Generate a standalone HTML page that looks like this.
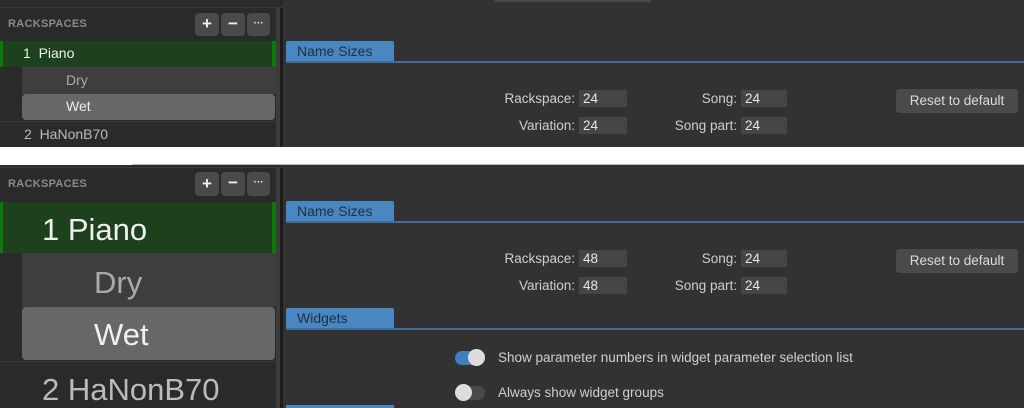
<!DOCTYPE html>
<html><head><style>
*{margin:0;padding:0;box-sizing:border-box}
body{width:1024px;height:408px;background:#fff;font-family:"Liberation Sans",sans-serif;position:relative;overflow:hidden}
.a{position:absolute}
.side{background:#2a2a2a}
.main{background:#323232}
.hdr{color:#8a8a8a;font-weight:bold;font-size:11px;letter-spacing:.3px}
.btn{background:#4a4a4a;border-radius:4px;color:#eee;font-weight:bold;text-align:center}
.tab{background:#4a86c0;color:#1e2f44;font-size:14px;padding-left:11px;border-radius:2px 2px 0 0}
.line{height:2px;background:#3d6e9e}
.lbl{color:#cfcfcf;font-size:13.5px;text-align:right;white-space:nowrap}
.inp{background:#454545;color:#e6e6e6;font-size:13.5px;padding-left:4px;line-height:17px}
.rst{background:#4a4a4a;color:#ddd;font-size:13.5px;border-radius:3px;text-align:center}
</style></head><body>
<!-- TOP -->
<div class="a main" style="left:283px;top:0;width:741px;height:147px"></div>
<div class="a side" style="left:0;top:0;width:283px;height:147px"></div>
<div class="a" style="left:0;top:7px;width:283px;height:1px;background:#3a3a3a"></div>
<div class="a" style="left:276px;top:8px;width:4px;height:139px;background:#3c3c3c"></div>
<div class="a" style="left:280px;top:8px;width:3px;height:139px;background:#1c1c1c"></div>
<div class="a hdr" style="left:8px;top:18px">RACKSPACES</div>
<div class="a btn" style="left:195px;top:13px;width:24px;height:23px;font-size:17px;line-height:22px">+</div>
<div class="a btn" style="left:221px;top:13px;width:24px;height:23px;font-size:17px;line-height:21px">−</div>
<div class="a btn" style="left:247px;top:13px;width:23px;height:23px;font-size:10px;line-height:21px">···</div>
<div class="a" style="left:0;top:41px;width:276px;height:26px;background:#1d401d;border-left:3px solid #0b7a0b;border-right:4px solid #0b7a0b"></div>
<div class="a" style="left:23px;top:45px;color:#f0f0f0;font-size:14px">1 &nbsp;Piano</div>
<div class="a" style="left:22px;top:67px;width:254px;height:27px;background:#3e3e3e"></div>
<div class="a" style="left:66px;top:72px;color:#aaa;font-size:14px">Dry</div>
<div class="a" style="left:22px;top:94px;width:253px;height:26px;background:#676767;border-radius:4px"></div>
<div class="a" style="left:66px;top:98px;color:#f0f0f0;font-size:14px">Wet</div>
<div class="a" style="left:0;top:121px;width:276px;height:1px;background:#3a3a3a"></div>
<div class="a" style="left:24px;top:126px;color:#bbb;font-size:14px">2 &nbsp;HaNonB70</div>
<div class="a" style="left:495px;top:0;width:156px;height:2px;background:#4a4a4a"></div>
<div class="a tab" style="left:286px;top:41px;width:108px;height:21px;line-height:21px">Name Sizes</div>
<div class="a line" style="left:286px;top:61px;width:738px"></div>
<div class="a lbl" style="left:440px;top:91px;width:135px">Rackspace:</div>
<div class="a inp" style="left:579px;top:90px;width:48px;height:17px">24</div>
<div class="a lbl" style="left:440px;top:118px;width:135px">Variation:</div>
<div class="a inp" style="left:579px;top:117px;width:48px;height:17px">24</div>
<div class="a lbl" style="left:600px;top:91px;width:137px">Song:</div>
<div class="a inp" style="left:741px;top:90px;width:46px;height:17px">24</div>
<div class="a lbl" style="left:600px;top:118px;width:137px">Song part:</div>
<div class="a inp" style="left:741px;top:117px;width:46px;height:17px">24</div>
<div class="a rst" style="left:896px;top:89px;width:122px;height:24px;line-height:24px">Reset to default</div>
<!-- BOTTOM -->
<div class="a main" style="left:283px;top:165px;width:741px;height:243px"></div>
<div class="a side" style="left:0;top:165px;width:283px;height:243px"></div>
<div class="a" style="left:132px;top:164px;width:892px;height:1px;background:#bbb"></div>
<div class="a" style="left:0;top:167px;width:283px;height:1px;background:#3a3a3a"></div>
<div class="a" style="left:276px;top:168px;width:4px;height:240px;background:#3c3c3c"></div>
<div class="a" style="left:280px;top:168px;width:3px;height:240px;background:#1c1c1c"></div>
<div class="a hdr" style="left:8px;top:178px">RACKSPACES</div>
<div class="a btn" style="left:195px;top:172px;width:24px;height:24px;font-size:17px;line-height:23px">+</div>
<div class="a btn" style="left:221px;top:172px;width:24px;height:24px;font-size:17px;line-height:22px">−</div>
<div class="a btn" style="left:247px;top:172px;width:23px;height:24px;font-size:10px;line-height:22px">···</div>
<div class="a" style="left:0;top:202px;width:276px;height:51px;background:#1d401d;border-left:3px solid #0b7a0b;border-right:4px solid #0b7a0b"></div>
<div class="a" style="left:42px;top:212px;color:#f0f0f0;font-size:31px">1 Piano</div>
<div class="a" style="left:22px;top:253px;width:254px;height:54px;background:#3e3e3e"></div>
<div class="a" style="left:94px;top:265px;color:#aaa;font-size:31px">Dry</div>
<div class="a" style="left:22px;top:307px;width:253px;height:53px;background:#676767;border-radius:4px"></div>
<div class="a" style="left:94px;top:317px;color:#f0f0f0;font-size:31px">Wet</div>
<div class="a" style="left:0;top:361px;width:276px;height:1px;background:#3a3a3a"></div>
<div class="a" style="left:42px;top:372px;color:#bbb;font-size:31px">2 HaNonB70</div>
<div class="a tab" style="left:286px;top:201px;width:108px;height:21px;line-height:21px">Name Sizes</div>
<div class="a line" style="left:286px;top:221px;width:738px"></div>
<div class="a lbl" style="left:440px;top:251px;width:135px">Rackspace:</div>
<div class="a inp" style="left:579px;top:250px;width:48px;height:17px">48</div>
<div class="a lbl" style="left:440px;top:278px;width:135px">Variation:</div>
<div class="a inp" style="left:579px;top:277px;width:48px;height:17px">48</div>
<div class="a lbl" style="left:600px;top:251px;width:137px">Song:</div>
<div class="a inp" style="left:741px;top:250px;width:46px;height:17px">24</div>
<div class="a lbl" style="left:600px;top:278px;width:137px">Song part:</div>
<div class="a inp" style="left:741px;top:277px;width:46px;height:17px">24</div>
<div class="a rst" style="left:896px;top:249px;width:122px;height:24px;line-height:24px">Reset to default</div>
<div class="a tab" style="left:286px;top:308px;width:108px;height:21px;line-height:21px">Widgets</div>
<div class="a line" style="left:286px;top:328px;width:738px"></div>
<div class="a" style="left:455px;top:351px;width:30px;height:14px;border-radius:7px;background:#3f7fc0"></div>
<div class="a" style="left:468px;top:349px;width:17px;height:17px;border-radius:50%;background:#ddd"></div>
<div class="a lbl" style="left:498px;top:350px;text-align:left">Show parameter numbers in widget parameter selection list</div>
<div class="a" style="left:455px;top:386px;width:30px;height:14px;border-radius:7px;background:#4a4a4a"></div>
<div class="a" style="left:455px;top:384px;width:17px;height:17px;border-radius:50%;background:#ddd"></div>
<div class="a lbl" style="left:498px;top:385px;text-align:left">Always show widget groups</div>
<div class="a" style="left:286px;top:405px;width:108px;height:3px;background:#4a86c0"></div>
</body></html>
